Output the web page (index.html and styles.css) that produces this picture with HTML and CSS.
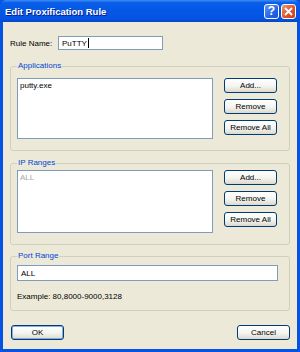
FILE: index.html
```html
<!doctype html>
<html>
<head>
  <title>Edit Proxification Rule</title>
  <link rel="stylesheet" href="styles.css">
</head>
<body>
<div class="window">
	<div class="titlebar">
		<span class="title">Edit Proxification Rule</span>
		<span class="caption-btn help-btn">?</span>
		<span class="caption-btn close-btn">
			<svg width="9" height="9" viewBox="0 0 9 9"><path d="M1 1 L8 8 M8 1 L1 8" stroke="#fff" stroke-width="1.8"/></svg>
		</span>
	</div>

	<div class="dialog">
		<div class="name-row">
			<span class="label">Rule Name:</span>
			<div class="edit name-edit">PuTTY<span class="caret"></span></div>
		</div>

		<fieldset class="group apps-group">
			<legend>Applications</legend>
			<div class="group-row">
				<div class="listbox"><div class="item">putty.exe</div></div>
				<div class="btn-col">
					<button class="btn">Add...</button>
					<button class="btn">Remove</button>
					<button class="btn">Remove All</button>
				</div>
			</div>
		</fieldset>

		<fieldset class="group ip-group">
			<legend>IP Ranges</legend>
			<div class="group-row">
				<div class="listbox ip-list"><div class="item grey">ALL</div></div>
				<div class="btn-col">
					<button class="btn">Add...</button>
					<button class="btn">Remove</button>
					<button class="btn">Remove All</button>
				</div>
			</div>
		</fieldset>

		<fieldset class="group port-group">
			<legend>Port Range</legend>
			<div class="edit port-edit">ALL</div>
			<div class="hint">Example: 80,8000-9000,3128</div>
		</fieldset>

		<div class="footer">
			<button class="btn btn-default">OK</button>
			<button class="btn">Cancel</button>
		</div>
	</div>
</div>
</body>
</html>
```

FILE: styles.css
```css
*,
*:before,
*:after {
	box-sizing: border-box;
}

html,
body {
	margin: 0;
	padding: 0;
}

body {
	font-family: "Liberation Sans", Arial, sans-serif;
	font-size: 8px;
	color: #000;
}

.window {
	width: 300px;
	height: 352px;
	display: flex;
	flex-direction: column;
	background: #0553e3;
}

/* title bar */

.titlebar {
	height: 22px;
	display: flex;
	align-items: center;
	padding: 0 4px 0 5px;
	border-radius: 6px 6px 0 0;
	background: linear-gradient(#3d8cf6 0%, #0a5fe8 12%, #0458e6 45%, #0553e3 85%, #0446c8 100%);
}

.title {
	flex: 1;
	color: #fff;
	font-weight: bold;
	font-size: 9.5px;
	text-shadow: 1px 1px 0 #0a1e8a;
}

.caption-btn {
	width: 15px;
	height: 15px;
	margin-left: 2px;
	border: 1px solid #fff;
	border-radius: 3px;
	display: flex;
	align-items: center;
	justify-content: center;
	color: #fff;
	font-weight: bold;
	font-size: 12px;
}

.help-btn {
	background: linear-gradient(135deg, #5d9bfa, #2664e6 60%, #1a50d0);
}

.close-btn {
	background: linear-gradient(135deg, #f09470, #e0542c 55%, #c9401c);
}

/* dialog body */

.dialog {
	flex: 1;
	margin: 0 3px 3px 3px;
	padding: 14px 7px 0 7px;
	background: #ece9d8;
}

.name-row {
	display: flex;
	align-items: center;
	height: 14px;
}

.label {
	width: 48px;
}

.edit {
	background: #fff;
	border: 1px solid #7f9db9;
	padding: 0 3px;
	display: flex;
	align-items: center;
}

.name-edit {
	width: 105px;
	height: 14px;
}

.caret {
	display: inline-block;
	width: 1px;
	height: 10px;
	background: #000;
	margin-left: 1px;
}

/* group boxes */

.group {
	margin: 0;
	border: 1px solid #d0d0bf;
	border-radius: 3px;
	padding: 0 12px 11px 6px;
	min-width: 0;
}

.group legend {
	color: #0046d5;
	padding: 0 1px;
	line-height: 10px;
	height: 10px;
}

.apps-group {
	margin-top: 11px;
	padding-top: 7px;
}

.ip-group {
	margin-top: 7px;
	padding-top: 2px;
}

.port-group {
	margin-top: 6px;
	padding-top: 4px;
	padding-bottom: 8px;
}

.group-row {
	display: flex;
	align-items: flex-start;
	gap: 11px;
}

.listbox {
	width: 196px;
	height: 61px;
	background: #fff;
	border: 1px solid #7f9db9;
	padding: 2px 2px;
}

.ip-list {
	height: 63px;
}

.item {
	line-height: 10px;
}

.grey {
	color: #a7a6aa;
}

.btn-col {
	display: flex;
	flex-direction: column;
	gap: 6px;
}

.btn {
	width: 53px;
	height: 15px;
	padding: 0;
	border: 1px solid #003c74;
	border-radius: 3px;
	background: linear-gradient(#ffffff, #f4f4f0 55%, #dcd8cc);
	font-family: inherit;
	font-size: 8px;
	color: #000;
}

.btn-default {
	box-shadow: inset 0 0 0 1px #8aaae8;
}

.port-edit {
	width: 261px;
	height: 16px;
}

.hint {
	margin-top: 11px;
	line-height: 10px;
}

.footer {
	display: flex;
	justify-content: space-between;
	margin-top: 14px;
	padding: 0 0 0 1px;
}
```
